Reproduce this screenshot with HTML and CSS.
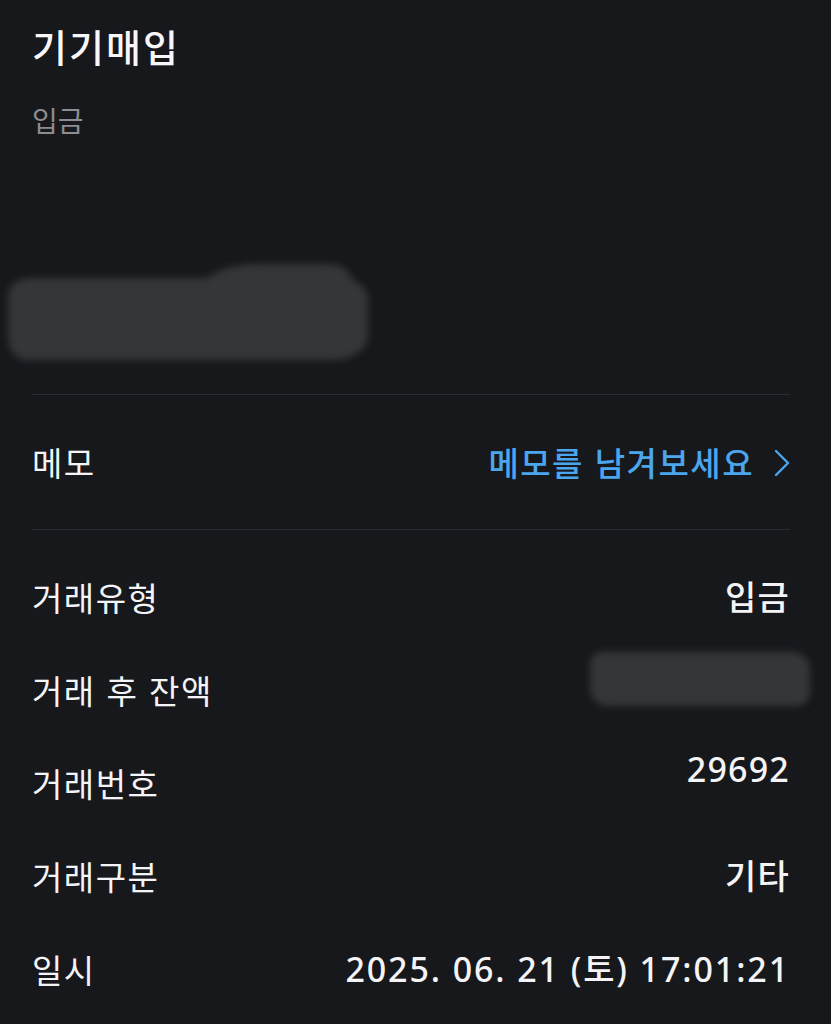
FILE: index.html
```html
<!DOCTYPE html>
<html lang="ko">
<head>
<meta charset="utf-8">
<link rel="stylesheet" href="styles.css">
</head>
<body>
<div class="page">
  <div class="header">
    <div class="title">기기매입</div>
    <div class="subtitle">입금</div>
  </div>
  <div class="amount">
    <div class="blob blob-amount"><div class="blob-bump"></div></div>
  </div>
  <div class="memo-row">
    <div class="label">메모</div>
    <div class="memo-link">
      <span>메모를 남겨보세요</span>
      <svg class="chev" width="16" height="28" viewBox="0 0 16 28"><polyline points="2,2 14,14 2,26" fill="none" stroke="#4ba6ee" stroke-width="2.4" stroke-linecap="round" stroke-linejoin="round"/></svg>
    </div>
  </div>
  <div class="details">
    <div class="row"><div class="label">거래유형</div><div class="value">입금</div></div>
    <div class="row"><div class="label">거래 후 잔액</div><div class="value"><div class="blob blob-balance"></div></div></div>
    <div class="row"><div class="label">거래번호</div><div class="value raised">29692</div></div>
    <div class="row"><div class="label">거래구분</div><div class="value">기타</div></div>
    <div class="row"><div class="label">일시</div><div class="value date">2025. 06. 21 (토) 17:01:21</div></div>
  </div>
</div>
</body>
</html>
```
FILE: styles.css
```css
html, body {
  margin: 0;
  padding: 0;
  background: #17181c;
}
body {
  font-family: "Noto Sans CJK KR", "Noto Sans", sans-serif;
  color: #f4f4f6;
  width: 831px;
  height: 1024px;
  overflow: hidden;
}
.page {
  padding: 22px 41px 0 32px;
}
.title {
  font-size: 38px;
  line-height: 48px;
  font-weight: 500;
  letter-spacing: 2px;
  color: #f7f7f9;
}
.subtitle {
  margin-top: 32px;
  font-size: 28px;
  line-height: 36px;
  color: #8c8c92;
}
.amount {
  height: 257px;
  box-sizing: border-box;
  padding-top: 140px;
  border-bottom: 1.5px solid #2c2d32;
}
.blob {
  background: #353638;
  filter: blur(3.5px);
}
.blob-amount {
  position: relative;
  margin-left: -24px;
  width: 360px;
  height: 82px;
  border-radius: 24px 30px 34px 18px / 16px 20px 24px 22px;
}
.blob-bump {
  position: absolute;
  left: 190px;
  top: -14px;
  width: 155px;
  height: 50px;
  background: #353638;
  border-radius: 60px 24px 0 0 / 30px 20px 0 0;
}
.memo-row {
  height: 134px;
  display: flex;
  align-items: center;
  justify-content: space-between;
  border-bottom: 1.5px solid #2c2d32;
}
.label {
  font-size: 33px;
  line-height: 46px;
  letter-spacing: 1.5px;
}
.memo-link {
  display: flex;
  align-items: center;
  gap: 20px;
  color: #4ba6ee;
  font-size: 33px;
  line-height: 46px;
  font-weight: 500;
  letter-spacing: 1.5px;
}
.chev {
  display: block;
  margin-top: 2px;
}
.details {
  padding-top: 20px;
}
.row {
  height: 93px;
  display: flex;
  align-items: center;
  justify-content: space-between;
}
.value {
  font-family: "Noto Sans", "Noto Sans CJK KR", sans-serif;
  font-size: 34px;
  line-height: 46px;
  font-weight: 500;
  letter-spacing: 1.2px;
}
.value.date {
  letter-spacing: 1.9px;
}
.value.raised {
  margin-bottom: 28px;
}
.blob-balance {
  margin-right: -20px;
  margin-bottom: 22px;
  width: 220px;
  height: 54px;
  border-radius: 12px 18px 14px 18px;
}
```
